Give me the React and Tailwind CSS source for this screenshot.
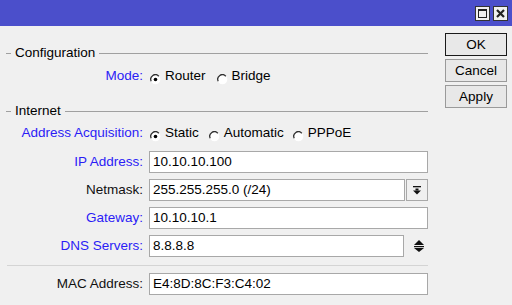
import { useState } from 'react';

const Radio = ({ checked }) => (
    <svg width="11" height="11" viewBox="0 0 11 11" className="mt-[6px] shrink-0">
        <circle cx="5.5" cy="5.5" r="4.8" fill="#fff" />
        <path d="M1.2 7.2 A4.6 4.6 0 0 1 8.8 2.2" fill="none" stroke="#303030" strokeWidth="1.3" />
        {checked && <circle cx="5.5" cy="5.5" r="1.8" fill="#000" />}
    </svg>
);

const Section = ({ title }) => (
    <div className="flex items-center h-[18px]">
        <div className="w-[5px] h-px bg-[#a0a0a0]" />
        <span className="px-[4px] text-black">{title}</span>
        <div className="flex-1 h-px bg-[#a0a0a0]" />
    </div>
);

const Label = ({ text, blue }) => (
    <div className={`w-[137px] shrink-0 text-right ${blue ? 'text-[#2b1cf6]' : 'text-[#111]'}`}>{text}</div>
);

const Field = ({ value }) => (
    <div className="flex-1 h-[22px] bg-white border border-[#a8a8a8] pl-[3px] flex items-center text-black">{value}</div>
);

const Btn = ({ children, def }) => (
    <button className={`w-[62px] h-[23px] bg-[#e8e8e8] border ${def ? 'border-[#1a1a1a]' : 'border-[#9a9a9a]'} text-black text-[13.5px] flex items-center justify-center`}>
        {children}
    </button>
);

export default function App() {
    const [mode, setMode] = useState('router');
    const [acq, setAcq] = useState('static');

    return (
        <div className="w-[512px] h-[305px] bg-[#f0f0f0] text-[13.5px] leading-none overflow-hidden" style={{ fontFamily: '"Liberation Sans", Arial, sans-serif' }}>
            {/* title bar */}
            <div className="h-[26px] bg-[#4b4fcb] flex items-center justify-end pr-[4px] gap-[3px]">
                <div className="w-[15px] h-[15px] bg-[#f0f0f0] border border-[#333] flex items-center justify-center">
                    <div className="w-[9px] h-[9px] border border-[#222] border-t-2" />
                </div>
                <div className="w-[15px] h-[15px] bg-[#f0f0f0] border border-[#333] flex items-center justify-center">
                    <svg width="9" height="9" viewBox="0 0 9 9">
                        <path d="M1 1 L8 8 M8 1 L1 8" stroke="#222" strokeWidth="2.2" />
                    </svg>
                </div>
            </div>

            <div className="flex">
                {/* left panel */}
                <div className="w-[422px] ml-[6px] flex flex-col">
                    <div className="mt-[18px]"><Section title="Configuration" /></div>

                    <div className="flex items-center h-[22px] mt-[3px]">
                        <Label text="Mode:" blue />
                        <div className="flex items-center ml-[7px] cursor-default" onClick={() => setMode('router')}>
                            <Radio checked={mode === 'router'} />
                            <span className="ml-[4px] text-black">Router</span>
                        </div>
                        <div className="flex items-center ml-[11px] cursor-default" onClick={() => setMode('bridge')}>
                            <Radio checked={mode === 'bridge'} />
                            <span className="ml-[4px] text-black">Bridge</span>
                        </div>
                    </div>

                    <div className="mt-[15px]"><Section title="Internet" /></div>

                    <div className="flex items-center h-[22px] mt-[2px]">
                        <Label text="Address Acquisition:" blue />
                        <div className="flex items-center ml-[7px]" onClick={() => setAcq('static')}>
                            <Radio checked={acq === 'static'} />
                            <span className="ml-[4px] text-black">Static</span>
                        </div>
                        <div className="flex items-center ml-[10px]" onClick={() => setAcq('auto')}>
                            <Radio checked={acq === 'auto'} />
                            <span className="ml-[4px] text-black">Automatic</span>
                        </div>
                        <div className="flex items-center ml-[9px]" onClick={() => setAcq('pppoe')}>
                            <Radio checked={acq === 'pppoe'} />
                            <span className="ml-[4px] text-black">PPPoE</span>
                        </div>
                    </div>

                    <div className="flex items-center gap-[6px] mt-[7px]">
                        <Label text="IP Address:" blue />
                        <Field value="10.10.10.100" />
                    </div>

                    <div className="flex items-center gap-[6px] mt-[6px]">
                        <Label text="Netmask:" />
                        <Field value="255.255.255.0 (/24)" />
                        <div className="w-[22px] h-[22px] -ml-[5px] bg-[#f0f0f0] border border-[#a8a8a8] flex items-center justify-center">
                            <svg width="8" height="9" viewBox="0 0 8 9">
                                <rect x="0" y="0" width="8" height="1.3" fill="#111" />
                                <rect x="2.5" y="2.5" width="3" height="2" fill="#111" />
                                <polygon points="0,4.5 8,4.5 4,8.5" fill="#111" />
                            </svg>
                        </div>
                    </div>

                    <div className="flex items-center gap-[6px] mt-[6px]">
                        <Label text="Gateway:" blue />
                        <Field value="10.10.10.1" />
                    </div>

                    <div className="flex items-center gap-[6px] mt-[6px]">
                        <Label text="DNS Servers:" blue />
                        <Field value="8.8.8.8" />
                        <div className="w-[18px] h-[22px] flex items-center justify-center">
                            <svg width="10" height="12" viewBox="0 0 10 12">
                                <polygon points="5,0 10,5 0,5" fill="#111" />
                                <rect x="0" y="6" width="10" height="1.2" fill="#111" />
                                <polygon points="0,8 10,8 5,12" fill="#111" />
                            </svg>
                        </div>
                    </div>

                    <div className="h-px bg-[#d4d4d4] mt-[8px] ml-[1px]" />

                    <div className="flex items-center gap-[6px] mt-[7px]">
                        <Label text="MAC Address:" />
                        <Field value="E4:8D:8C:F3:C4:02" />
                    </div>
                </div>

                {/* right buttons */}
                <div className="ml-[17px] mt-[7px] flex flex-col gap-[3px]">
                    <Btn def>OK</Btn>
                    <Btn>Cancel</Btn>
                    <Btn>Apply</Btn>
                </div>
            </div>
        </div>
    );
}
